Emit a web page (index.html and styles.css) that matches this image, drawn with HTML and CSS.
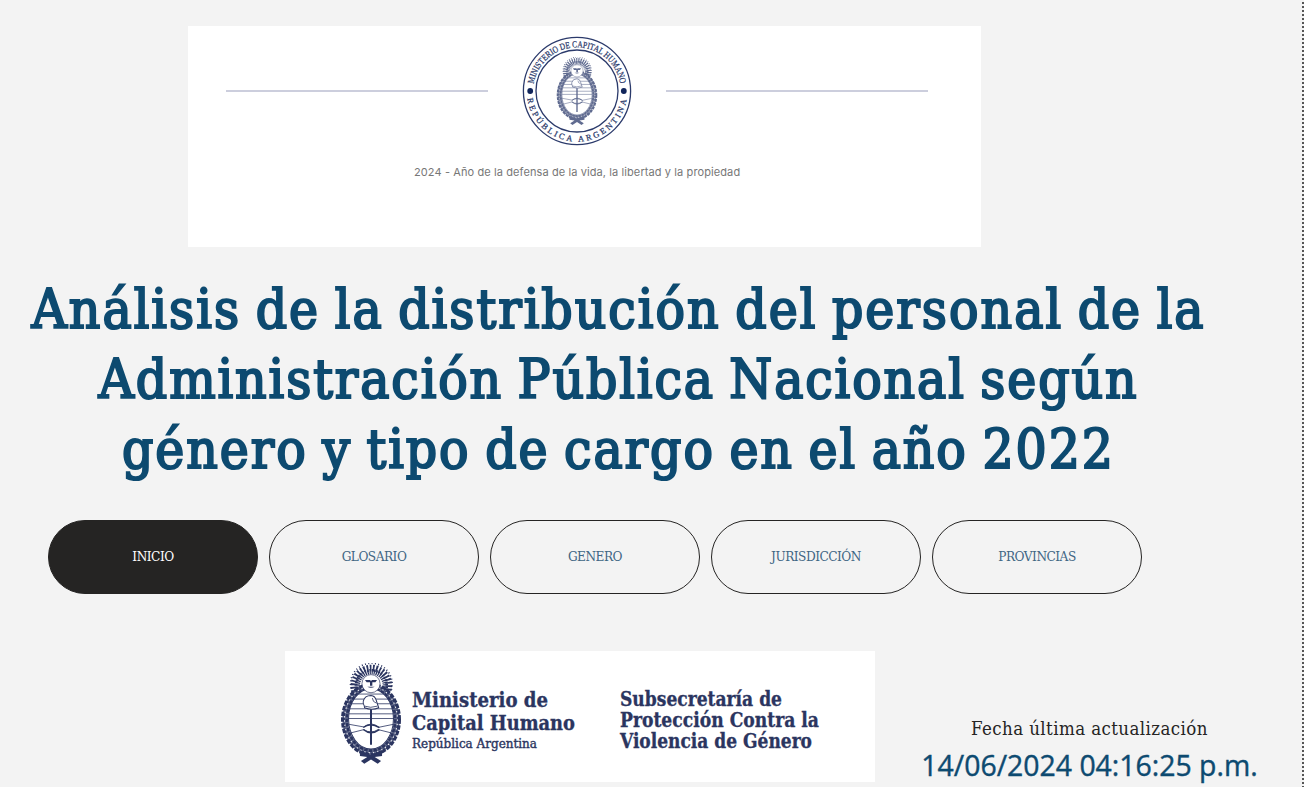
FILE: index.html
```html
<!DOCTYPE html>
<html lang="es">
<head>
<meta charset="utf-8">
<title>Análisis de la distribución del personal</title>
<link rel="stylesheet" href="styles.css">
</head>
<body>
<svg class="defs" width="0" height="0" aria-hidden="true">
  <symbol id="arms" viewBox="0 0 182 300">
    <g fill="none" stroke="currentColor">
      <path d="M43 84A52 52 0 1 1 141 84" stroke-width="20" stroke-dasharray="5 4.4"/>
      <path d="M52 80A42 42 0 1 1 132 80" stroke-width="16" stroke-dasharray="4 2.6"/>
      <path d="M34 84A62 62 0 1 1 150 84" stroke-width="5" stroke-dasharray="3 7"/>
      <ellipse cx="91" cy="168" rx="77" ry="97" stroke-width="17" opacity=".75"/>
      <ellipse cx="91" cy="168" rx="84" ry="104" stroke-width="11" stroke-dasharray="13 4"/>
      <ellipse cx="91" cy="168" rx="72" ry="93" stroke-width="8" stroke-dasharray="10 4"/>
      <ellipse cx="91" cy="168" rx="79" ry="99" stroke="#fff" stroke-width="3" stroke-dasharray="4 9"/>
    </g>
    <ellipse cx="91" cy="166" rx="67" ry="90" fill="#fff" stroke="currentColor" stroke-width="3"/>
    <circle cx="91" cy="61" r="27" fill="#fff" stroke="currentColor" stroke-width="2"/>
    <path d="M73 50h16v7H78zm20 0h16l-5 7H93zM88 52h7v15h-7zM80 70q11 6 22 0" fill="currentColor"/>
    <g fill="none" stroke="currentColor" stroke-width="2.4">
      <path d="M51 92h80M34 107h114M28 121h126M24 136h134M24 151h134M23 165h136"/>
      <path d="M24 182l45 8 12-6q12-6 24 1l10 6 44-9M30 208l40-10q20 14 42 0l40 10"/>
      <path d="M68 192q20-17 48 0M68 198q22 19 48 0" stroke-width="4"/>
      <path d="M91 134v109" stroke-width="6"/>
      <path d="M71 128q-5-10-3-15 4-17 23-17 13 1 16 16l7 21q-20 9-42 0z" fill="#fff" stroke-width="3"/>
      <path d="M72 128q17 7 38 0M95 104q1 12 12 15"/>
    </g>
    <path d="M58 260l33 14 33-14v17l-22 3 19 12-10 8-20-13-20 13-10-8 19-12-22-3z" fill="currentColor"/>
  </symbol>
</svg>
<main class="report">
  <header class="banner">
    <div class="banner-row">
      <i class="rule"></i>
      <svg class="seal" width="110" height="110" viewBox="-55 -55 110 110" role="img" aria-label="Ministerio de Capital Humano">
        <defs>
          <path id="arc-top" d="M-43.3 -7A43.9 43.9 0 0 1 43.3 -7"/>
          <path id="arc-bottom" d="M-49.7 7.5A50.2 50.2 0 0 0 49.7 7.5"/>
        </defs>
        <circle r="53.6"/><circle r="41"/>
        <circle class="dot" cx="-46.8" r="2.9"/><circle class="dot" cx="46.8" r="2.9"/>
        <text class="seal-top"><textPath href="#arc-top" textLength="123" lengthAdjust="spacingAndGlyphs">MINISTERIO DE CAPITAL HUMANO</textPath></text>
        <text><textPath href="#arc-bottom" textLength="142">REPÚBLICA ARGENTINA</textPath></text>
        <use href="#arms" x="-21" y="-34" width="42" height="68" opacity=".75"/>
      </svg>
      <i class="rule"></i>
    </div>
    <p class="motto">2024 - Año de la defensa de la vida, la libertad y la propiedad</p>
  </header>

  <h1 class="title">
    <span class="l1">Análisis de la distribución del personal de la</span>
    <span class="l2">Administración Pública Nacional según</span>
    <span class="l3">género y tipo de cargo en el año 2022</span>
  </h1>

  <nav class="tabs">
    <a class="tab active">INICIO</a>
    <a class="tab">GLOSARIO</a>
    <a class="tab">GENERO</a>
    <a class="tab">JURISDICCIÓN</a>
    <a class="tab">PROVINCIAS</a>
  </nav>

  <footer class="foot">
    <div class="brand">
      <svg width="590" height="131" viewBox="285 651 590 131">
        <use href="#arms" x="340.5" y="663" width="61" height="101"/>
        <g class="brand-bold">
          <text x="412" y="707.3" textLength="136" lengthAdjust="spacingAndGlyphs">Ministerio de</text>
          <text x="412" y="729.5" textLength="163" lengthAdjust="spacingAndGlyphs">Capital Humano</text>
          <text x="620" y="706" textLength="162" lengthAdjust="spacingAndGlyphs">Subsecretaría de</text>
          <text x="620" y="727" textLength="199" lengthAdjust="spacingAndGlyphs">Protección Contra la</text>
          <text x="620" y="748" textLength="192" lengthAdjust="spacingAndGlyphs">Violencia de Género</text>
        </g>
        <text class="brand-sub" x="412" y="748" textLength="125" lengthAdjust="spacingAndGlyphs">República Argentina</text>
      </svg>
    </div>
    <div class="updated">
      <span class="updated-label">Fecha última actualización</span>
      <span class="updated-value">14/06/2024 04:16:25 p.m.</span>
    </div>
  </footer>
</main>
</body>
</html>
```
FILE: styles.css
```css
* { box-sizing: border-box; }
body { margin: 0; background: #f3f3f3; overflow: hidden; }
.defs { display: block; }
.report {
  width: 1304px; height: 787px; padding-top: 26px;
  display: flex; flex-direction: column;
  background: repeating-linear-gradient(to bottom, transparent 0 2px, #555 2px 4px) right top / 2px 100% no-repeat;
}
.banner { width: 793px; height: 221px; margin-left: 188px; background: #fff; flex: none; }
.banner-row { display: flex; align-items: center; gap: 34px; padding: 10px 0 0 38px; }
.rule { width: 262px; height: 2px; background: #cccedd; }
.seal { color: #2b3a6b; flex: none; }
.seal circle { fill: none; stroke: currentColor; stroke-width: 1.3; }
.seal .dot { fill: #10255b; stroke: none; }
.seal text { font: 8.4px "Liberation Serif", serif; fill: #2b3a6b; stroke: #2b3a6b; stroke-width: .25px; }
.seal .seal-top { font-size: 9.2px; }
.motto { margin: 17px 0 0 226px; font: 11px/18px Inter, sans-serif; letter-spacing: .1px; color: #777; white-space: nowrap; }
.title {
  width: 1237px; height: 210px; margin: 27px 0 0; flex: none;
  font: 400 54.5px/70px "DejaVu Serif Condensed", "DejaVu Serif", serif;
  font-stretch: condensed; word-spacing: -3px;
  color: #0d4a70; -webkit-text-stroke: 2.1px #0d4a70;
  display: flex; flex-direction: column; align-items: center; white-space: nowrap;
}
.l1 { letter-spacing: 2.02px; }
.l2 { letter-spacing: 1.9px; }
.l3 { letter-spacing: 1.97px; }
.tabs { display: flex; gap: 11px; margin: 36px 0 0 48px; }
.tab {
  width: 210px; height: 74px; border: 1px solid #252423; border-radius: 37px;
  display: flex; align-items: center; justify-content: center;
  font: 13.5px "DejaVu Serif Condensed", "DejaVu Serif", serif; font-stretch: condensed;
  color: #3f6684; letter-spacing: -.5px; padding-bottom: 2px;
}
.tab.active { background: #252423; color: #fff; }
.foot { display: flex; margin: 57px 0 0 285px; }
.brand { width: 590px; height: 131px; background: #fff; color: #2b3560; }
.brand svg { display: block; }
.brand-bold { font: 700 19.5px "DejaVu Serif Condensed", "DejaVu Serif", serif; font-stretch: condensed; fill: #2b3560; stroke: #2b3560; stroke-width: .3px; }
.brand-sub { font: 13.5px "DejaVu Serif Condensed", "DejaVu Serif", serif; font-stretch: condensed; fill: #2b3560; stroke: #2b3560; stroke-width: .4px; }
.updated { width: 430px; display: flex; flex-direction: column; align-items: center; padding-top: 65px; white-space: nowrap; }
.updated-label { font: 18.5px/26px "DejaVu Serif Condensed", "DejaVu Serif", serif; font-stretch: condensed; letter-spacing: .42px; color: #252423; }
.updated-value { font: 28.4px/44px "Open Sans", sans-serif; color: #0d4a70; -webkit-text-stroke: .4px #0d4a70; margin-top: 1px; }
```
